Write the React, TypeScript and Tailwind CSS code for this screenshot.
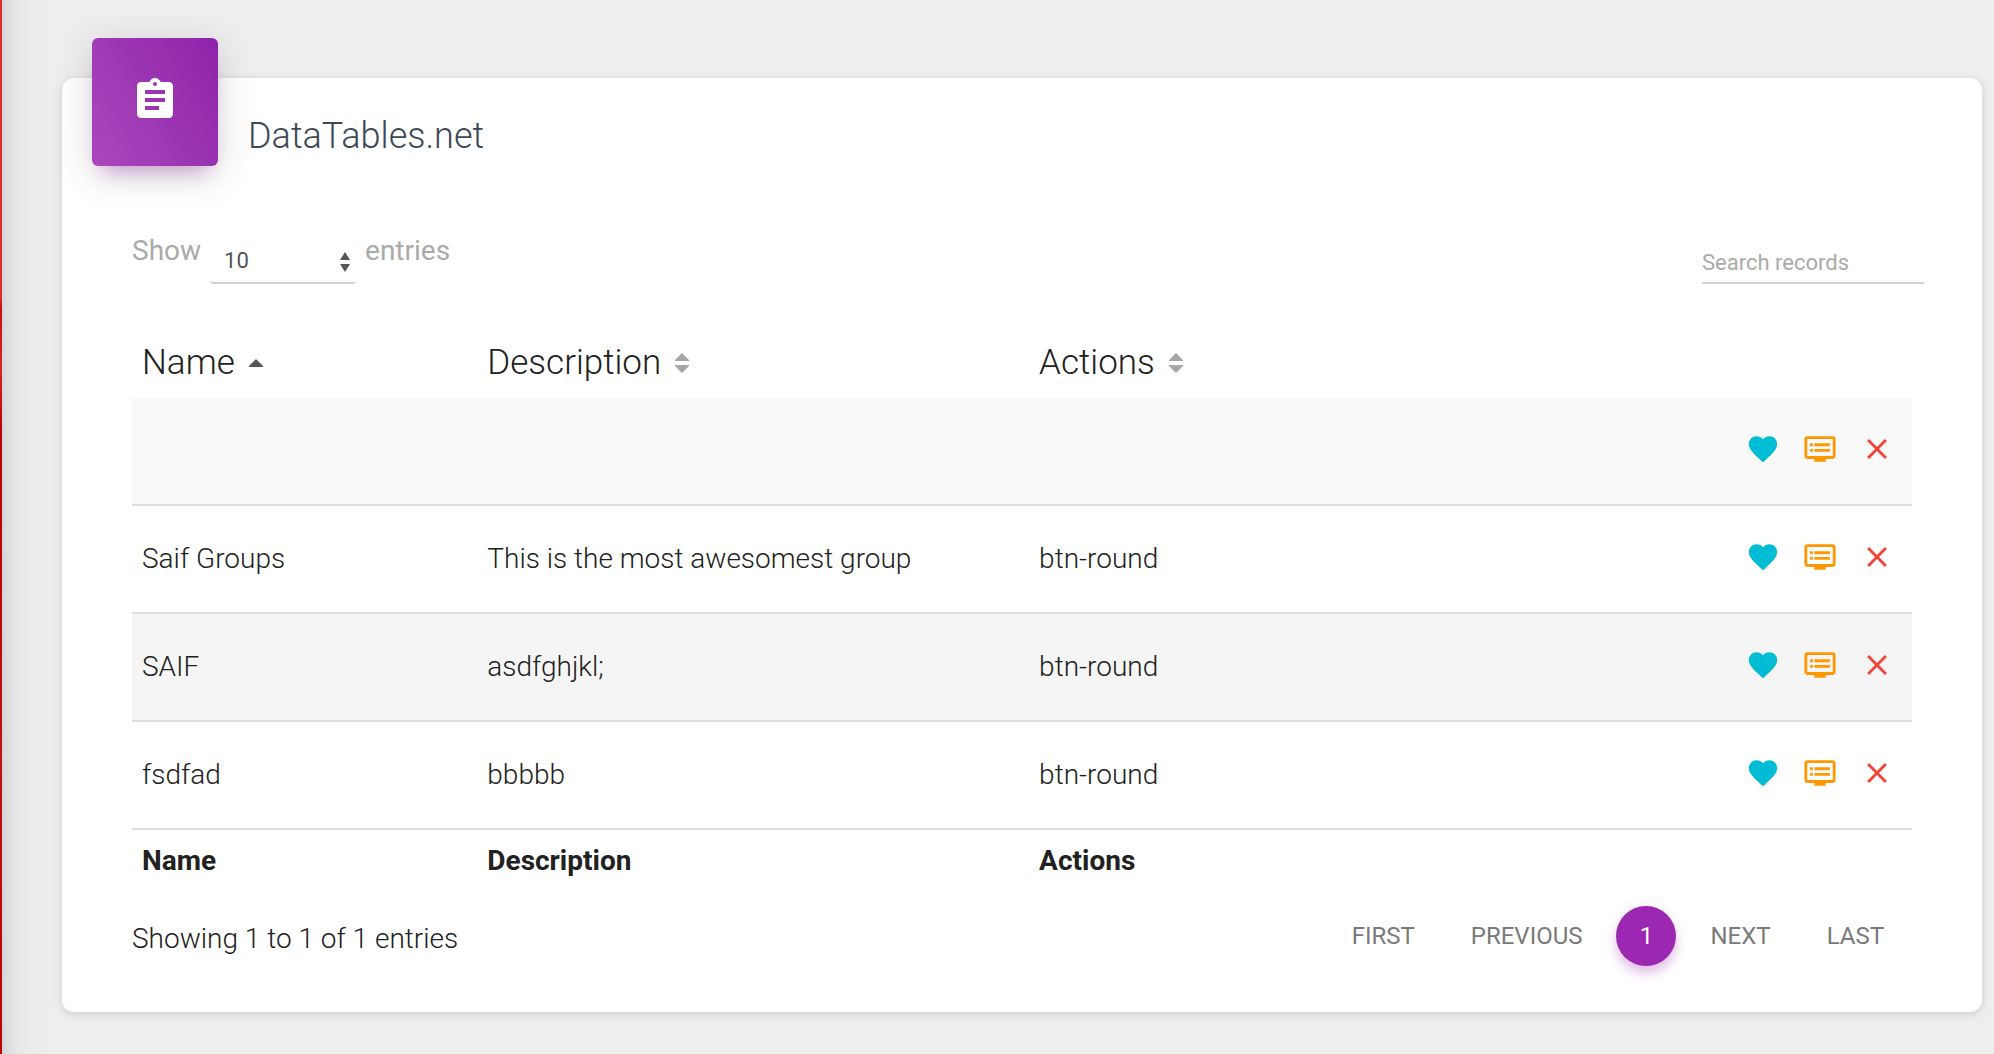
import { useState } from "react";
import { MdAssignment, MdClose, MdDvr, MdFavorite } from "react-icons/md";

type Group = { name: string; description: string; action: string };

const groups: Group[] = [
  { name: "", description: "", action: "" },
  { name: "Saif Groups", description: "This is the most awesomest group", action: "btn-round" },
  { name: "SAIF", description: "asdfghjkl;", action: "btn-round" },
  { name: "fsdfad", description: "bbbbb", action: "btn-round" },
];

const rowShades = ["bg-[#f9f9f9]", "bg-white", "bg-[#f5f5f5]", "bg-white"];

const columns = ["Name", "Description", "Actions"];

function SortIcon({ ascending }: { ascending: boolean }) {
  return (
    <svg viewBox="0 0 14 20" className="h-5 w-3.5" aria-hidden="true">
      {ascending ? (
        <path d="M7 6l7 7v1H0v-1z" fill="#555555" />
      ) : (
        <path d="M7 0l7 7v1H0V7zM0 12h14v1l-7 7-7-7z" fill="#a6a6a6" />
      )}
    </svg>
  );
}

function RowActions() {
  return (
    <div className="flex justify-end gap-[23px] pr-[18px] pb-1">
      <button type="button" aria-label="Like" className="text-[#00bcd4]">
        <MdFavorite size={34} />
      </button>
      <button type="button" aria-label="Edit" className="text-[#ff9800]">
        <MdDvr size={34} />
      </button>
      <button type="button" aria-label="Remove" className="text-[#f44336]">
        <MdClose size={34} />
      </button>
    </div>
  );
}

function Toolbar() {
  const [query, setQuery] = useState("");
  return (
    <div className="mt-[65px] flex items-end justify-between pr-[58px] pl-[70px]">
      <div className="flex items-start text-[28px] leading-10 text-[#aaaaaa]">
        <label htmlFor="page-size">Show</label>
        <span className="relative mx-[9px] mt-[5px] block">
          <select
            id="page-size"
            defaultValue="10"
            className="block h-12 w-[146px] appearance-none rounded-sm border-b-2 border-[#d2d2d2] bg-transparent px-3.5 pt-1 text-[22px] leading-none text-[#555555] outline-none"
          >
            <option>10</option>
            <option>25</option>
            <option>50</option>
            <option>All</option>
          </select>
          <svg
            viewBox="0 0 10 20"
            className="pointer-events-none absolute top-4 right-1.5 h-5 w-2.5"
            fill="#555555"
            aria-hidden="true"
          >
            <path d="M5 0l5 8H0zM0 12h10l-5 8z" />
          </svg>
        </span>
        <span>entries</span>
      </div>
      <input
        type="search"
        aria-label="Search records"
        placeholder="Search records"
        value={query}
        onChange={(event) => setQuery(event.target.value)}
        className="h-11 w-[222px] appearance-none border-b-2 border-[#d2d2d2] bg-transparent pt-0.5 text-[22px] text-[#555555] outline-none placeholder:text-[#aaaaaa]"
      />
    </div>
  );
}

function GroupsTable() {
  return (
    <table className="mt-[58px] w-full table-fixed border-separate border-spacing-0 text-left text-[28px] leading-10 font-light">
      <colgroup>
        <col className="w-[19.4%]" />
        <col className="w-[31%]" />
        <col className="w-[24%]" />
        <col />
      </colgroup>
      <thead>
        <tr>
          {columns.map((column, index) => (
            <th key={column} scope="col" className="px-2.5 pb-3.5 text-[35px] leading-[42px] font-light">
              <button type="button" className="flex items-center gap-3.5">
                {column}
                <SortIcon ascending={index === 0} />
              </button>
            </th>
          ))}
          <td />
        </tr>
      </thead>
      <tbody>
        {groups.map((group, index) => (
          <tr key={index} className={rowShades[index]}>
            <td className="h-[108px] border-b-2 border-[#dddddd] px-2.5">{group.name}</td>
            <td className="border-b-2 border-[#dddddd] px-2.5">{group.description}</td>
            <td className="border-b-2 border-[#dddddd] px-2.5">{group.action}</td>
            <td className="border-b-2 border-[#dddddd]">
              <RowActions />
            </td>
          </tr>
        ))}
      </tbody>
      <tfoot>
        <tr>
          {columns.map((column) => (
            <th key={column} scope="col" className="px-2.5 pt-[11px] pb-[9px] font-bold">
              {column}
            </th>
          ))}
          <td />
        </tr>
      </tfoot>
    </table>
  );
}

function PageLink({ children }: { children: string }) {
  return (
    <a href="#" className="px-7 uppercase">
      {children}
    </a>
  );
}

function Pagination() {
  return (
    <nav aria-label="Pages" className="flex items-center text-2xl leading-[60px] text-[#7a7a7a]">
      <PageLink>First</PageLink>
      <PageLink>Previous</PageLink>
      <a
        href="#"
        aria-current="page"
        className="mx-1.5 h-[60px] w-[60px] rounded-full bg-[#9c27b0] text-center text-white shadow-[0_8px_10px_0_rgba(156,39,176,0.2),0_4px_16px_0_rgba(156,39,176,0.12)]"
      >
        1
      </a>
      <PageLink>Next</PageLink>
      <PageLink>Last</PageLink>
    </nav>
  );
}

export default function App() {
  return (
    <div className="flex min-h-screen overflow-hidden bg-[#eeeeee] font-[Roboto,sans-serif] text-[#212121]">
      {/* Collapsed sidebar: only its right edge and shadow reach into the window. */}
      <aside className="-my-12 -ml-[258px] w-[260px] shrink-0 bg-[linear-gradient(#dc2a2f_30%,#c40d12_31%,#d8262b_36%,#b80004_42%,#c01018_70%,#bb0004)] shadow-[0_0_50px_0_rgba(0,0,0,0.1),0_0_16px_0_rgba(0,0,0,0.12)]" />
      <main className="min-w-0 flex-1 pt-[78px] pr-3 pb-[42px] pl-[60px]">
        <section className="rounded-xl bg-white shadow-[0_2px_8px_0_rgba(0,0,0,0.14)]">
          <header className="flex items-start pl-[30px]">
            <div className="-mt-10 flex h-32 w-[126px] items-center justify-center rounded-md bg-[linear-gradient(60deg,#ab47bc,#8e24aa)] pb-1 text-white shadow-[0_8px_40px_0_rgba(0,0,0,0.14),0_14px_20px_-10px_rgba(156,39,176,0.4)]">
              <MdAssignment size={48} />
            </div>
            <h4 className="mt-9 ml-[30px] text-4xl leading-[44px] font-light text-[#3c4858]">DataTables.net</h4>
          </header>
          <Toolbar />
          <div className="px-[70px] pb-10">
            <GroupsTable />
            <div className="mt-4 flex items-start justify-between">
              <p className="text-[28px] leading-[66px] font-light">Showing 1 to 1 of 1 entries</p>
              <Pagination />
            </div>
          </div>
        </section>
      </main>
    </div>
  );
}
